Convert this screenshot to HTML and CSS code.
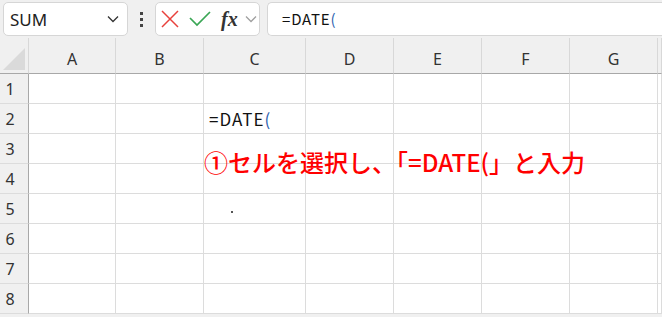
FILE: index.html
```html
<!DOCTYPE html>
<html lang="ja">
<head>
  <meta charset="UTF-8">
  <meta name="viewport" content="width=device-width, initial-scale=1.0">
  <link rel="stylesheet" href="styles.css">
  <title>DATE</title>
</head>
<body>
  <div class="toolbar">
    <div class="name-box">
      <span class="name-text">SUM</span>
      <svg class="chevron" width="12" height="8" viewBox="0 0 12 8"><path d="M1 1.5 L6 6.5 L11 1.5" fill="none" stroke="#333" stroke-width="1.3"/></svg>
    </div>
    <div class="dots"><span></span><span></span><span></span></div>
    <div class="fx-box">
      <svg class="icon-cancel" width="20" height="20" viewBox="0 0 20 20"><path d="M2 2 L18 18 M18 2 L2 18" stroke="#e8413c" stroke-width="1.5" fill="none"/></svg>
      <svg class="icon-enter" width="22" height="20" viewBox="0 0 22 20"><path d="M1 9 L8 16 L21 3" stroke="#3aa655" stroke-width="1.7" fill="none"/></svg>
      <span class="fx">fx</span>
      <svg class="fx-chev" width="12" height="8" viewBox="0 0 12 8"><path d="M1 1.5 L6 6.5 L11 1.5" fill="none" stroke="#a0a0a0" stroke-width="1.3"/></svg>
    </div>
    <div class="formula-bar">=DATE<span class="paren">(</span></div>
  </div>

  <div class="sheet">
    <div class="corner"><div class="triangle"></div></div>
    <div class="col-head">A</div>
    <div class="col-head">B</div>
    <div class="col-head">C</div>
    <div class="col-head">D</div>
    <div class="col-head">E</div>
    <div class="col-head">F</div>
    <div class="col-head">G</div>
    <div class="col-head"></div>

    <div class="row-head">1</div>
    <div class="cell"></div><div class="cell"></div><div class="cell"></div><div class="cell"></div><div class="cell"></div><div class="cell"></div><div class="cell"></div><div class="cell"></div>

    <div class="row-head">2</div>
    <div class="cell"></div><div class="cell"></div><div class="cell formula-cell">=DATE<span class="paren">(</span></div><div class="cell"></div><div class="cell"></div><div class="cell"></div><div class="cell"></div><div class="cell"></div>

    <div class="row-head">3</div>
    <div class="cell"></div><div class="cell"></div><div class="cell"></div><div class="cell"></div><div class="cell"></div><div class="cell"></div><div class="cell"></div><div class="cell"></div>

    <div class="row-head">4</div>
    <div class="cell"></div><div class="cell"></div><div class="cell"></div><div class="cell"></div><div class="cell"></div><div class="cell"></div><div class="cell"></div><div class="cell"></div>

    <div class="row-head">5</div>
    <div class="cell"></div><div class="cell"></div><div class="cell"><span class="dot"></span></div><div class="cell"></div><div class="cell"></div><div class="cell"></div><div class="cell"></div><div class="cell"></div>

    <div class="row-head">6</div>
    <div class="cell"></div><div class="cell"></div><div class="cell"></div><div class="cell"></div><div class="cell"></div><div class="cell"></div><div class="cell"></div><div class="cell"></div>

    <div class="row-head">7</div>
    <div class="cell"></div><div class="cell"></div><div class="cell"></div><div class="cell"></div><div class="cell"></div><div class="cell"></div><div class="cell"></div><div class="cell"></div>

    <div class="row-head">8</div>
    <div class="cell"></div><div class="cell"></div><div class="cell"></div><div class="cell"></div><div class="cell"></div><div class="cell"></div><div class="cell"></div><div class="cell"></div>

    <div class="note">①セルを選択し、「=DATE(」と入力</div>
  </div>
</body>
</html>
```

FILE: styles.css
```css
body {
  margin: 0;
  width: 662px;
  height: 317px;
  overflow: hidden;
  background-color: #f0f0f0;
  font-family: 'Noto Sans', 'Noto Sans CJK JP', sans-serif;
}

.toolbar {
  display: flex;
  align-items: center;
  height: 38px;
  padding: 0 0 0 3px;
}

.name-box {
  display: flex;
  align-items: center;
  justify-content: space-between;
  box-sizing: border-box;
  width: 125px;
  height: 34px;
  padding: 0 8px 0 6px;
  background-color: #ffffff;
  border: 1px solid #d6d6d6;
  border-radius: 5px;
}

.name-text {
  font-size: 17px;
  color: #222;
}

.dots {
  display: flex;
  flex-direction: column;
  gap: 3px;
  width: 27px;
  align-items: center;
}

.dots span {
  width: 3px;
  height: 3px;
  background-color: #444;
}

.fx-box {
  display: flex;
  align-items: center;
  box-sizing: border-box;
  width: 105px;
  height: 34px;
  background-color: #ffffff;
  border: 1px solid #d6d6d6;
  border-radius: 5px;
}

.icon-cancel {
  margin-left: 4px;
}

.icon-enter {
  margin-left: 9px;
}

.fx {
  margin-left: 10px;
  font-family: 'Liberation Serif', serif;
  font-style: italic;
  font-weight: bold;
  font-size: 20px;
  color: #333;
}

.fx-chev {
  margin-left: 7px;
}

.formula-bar {
  flex: 1;
  box-sizing: border-box;
  height: 34px;
  margin-left: 7px;
  padding-left: 14px;
  line-height: 32px;
  background-color: #ffffff;
  border: 1px solid #d6d6d6;
  border-right: none;
  border-radius: 5px 0 0 5px;
  font-family: 'Noto Sans CJK JP', sans-serif;
  font-size: 15px;
  letter-spacing: 0.8px;
  color: #111;
}

.paren {
  color: #2f62b0;
}

.sheet {
  position: relative;
  display: grid;
  grid-template-columns: 29px 87px 88px 102px 88px 88px 88px 88px 4px;
  grid-template-rows: 36px repeat(8, 30px);
}

.corner {
  border-right: 1px solid #d8d8d8;
  border-bottom: 1px solid #a8a8a8;
  position: relative;
}

.triangle {
  position: absolute;
  left: 3px;
  bottom: 3px;
  width: 0;
  height: 0;
  border-left: 22px solid transparent;
  border-bottom: 22px solid #dadada;
}

.col-head {
  display: flex;
  align-items: center;
  justify-content: center;
  padding-top: 6px;
  box-sizing: border-box;
  border-bottom: 1px solid #a8a8a8;
  border-right: 1px solid #d8d8d8;
  font-size: 16px;
  color: #333;
  background: linear-gradient(#f0f0f0, #f0f0f0) top / 100% 8px no-repeat;
}

.row-head {
  display: flex;
  align-items: center;
  justify-content: center;
  padding-right: 8px;
  border-right: 1px solid #a8a8a8;
  border-bottom: 1px solid #dcdcdc;
  font-size: 16px;
  color: #333;
}

.cell {
  background-color: #ffffff;
  border-right: 1px solid #dcdcdc;
  border-bottom: 1px solid #dcdcdc;
  position: relative;
}

.formula-cell {
  padding-left: 5px;
  line-height: 30px;
  font-family: 'Noto Sans CJK JP', sans-serif;
  font-size: 17px;
  letter-spacing: 1px;
  color: #111;
}

.dot {
  position: absolute;
  left: 27px;
  top: 17px;
  width: 2px;
  height: 2px;
  background-color: #555;
}

.note {
  position: absolute;
  left: 204px;
  top: 106px;
  font-family: 'Noto Sans CJK JP', sans-serif;
  font-size: 24px;
  font-weight: 500;
  color: #ff0000;
  white-space: nowrap;
}
```
